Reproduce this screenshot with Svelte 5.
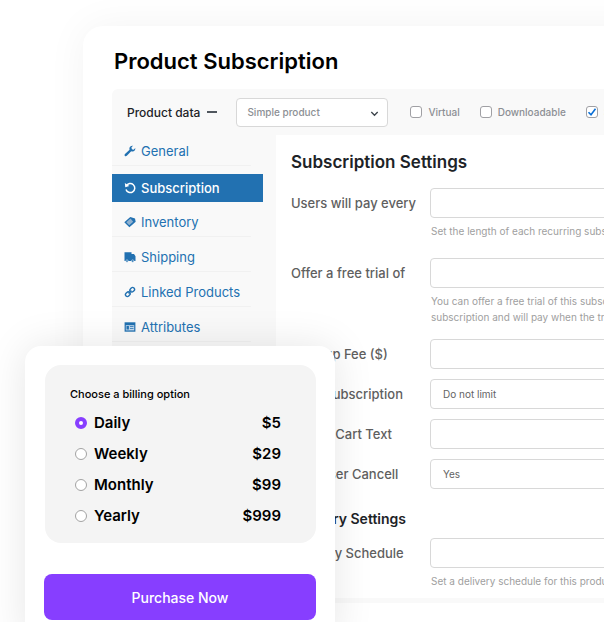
<script>
	const tabs = [
		{ id: 'general', label: 'General' },
		{ id: 'subscription', label: 'Subscription' },
		{ id: 'inventory', label: 'Inventory' },
		{ id: 'shipping', label: 'Shipping' },
		{ id: 'linked', label: 'Linked Products' },
		{ id: 'attributes', label: 'Attributes' }
	];

	const settings = [
		{ id: 'period', label: 'Users will pay every', hint: ['Set the length of each recurring subscription period.'] },
		{
			id: 'trial',
			label: 'Offer a free trial of',
			hint: [
				'You can offer a free trial of this subscription. The user gets the',
				'subscription and will pay when the trial period expires.'
			]
		},
		{ id: 'signup', label: 'Sign-up Fee ($)' },
		{ id: 'limit', label: 'Limit Subscription', options: ['Do not limit', 'Limit to one'] },
		{ id: 'cart', label: 'Add to Cart Text' },
		{ id: 'cancel', label: 'Can User Cancell', options: ['Yes', 'No'] }
	];

	const delivery = [
		{ id: 'schedule', label: 'Delivery Schedule', hint: ['Set a delivery schedule for this product.'] }
	];

	const plans = [
		{ id: 'daily', label: 'Daily', price: '$5' },
		{ id: 'weekly', label: 'Weekly', price: '$29' },
		{ id: 'monthly', label: 'Monthly', price: '$99' },
		{ id: 'yearly', label: 'Yearly', price: '$999' }
	];

	let activeTab = $state('subscription');
	let plan = $state('daily');
	let virtual = $state(false);
	let downloadable = $state(false);
	let subscription = $state(true);
</script>

{#snippet icon(id)}
	<svg class="icon" viewBox="0 0 12 12" aria-hidden="true">
		{#if id === 'general'}
			<path d="M11.3 3.1 9.6 4.7 7.9 4.2 7.4 2.5 9 .8C7.3.5 5.5 1.6 5.4 3.4c0 .5 0 .9.2 1.3L1 9.1c-.6.6-.6 1.3-.1 1.8s1.3.5 1.9-.1L7.2 6.3C9.500 7.3 11.700 5.4 11.3 3.1z" fill="currentColor" />
		{:else if id === 'subscription'}
			<path d="M2.3 3.9A4.5 4.5 0 1 1 2 7.4" fill="none" stroke="currentColor" stroke-width="1.5" />
			<path d="M.8.9 1.3 5.2 5.3 4z" fill="currentColor" />
		{:else if id === 'inventory'}
			<path d="M.3 6.3 6.3.9 11 2.4 11.7 5.8 5.4 11.3z" fill="currentColor" />
			<path d="M2.3 6.3 6.5 2.6 9.2 5.7 5.2 9.3z" fill="#8fb1d0" />
		{:else if id === 'shipping'}
			<path d="M.5 1.3h7v1.800h2.500l1.500 2.200v4.600H.5z" fill="currentColor" />
			<circle cx="3" cy="10" r="1.200" fill="currentColor" stroke="#fafafa" stroke-width=".5" />
			<circle cx="8.700" cy="10" r="1.200" fill="currentColor" stroke="#fafafa" stroke-width=".5" />
		{:else if id === 'linked'}
			<g fill="none" stroke="currentColor" stroke-width="1.4" transform="rotate(-45 6 6)">
				<rect x=".4" y="4.1" width="5" height="3.8" rx="1.9" />
				<rect x="6.6" y="4.1" width="5" height="3.8" rx="1.9" />
				<path d="M4 6h4" />
			</g>
		{:else}
			<path d="M.6 1.3h10.800v9.400H.6z" fill="currentColor" />
			<path d="M1.800 4.200h8.400v5.200H1.800z" fill="#c5dbee" />
			<path d="M2.500 5h2.400v3.600H2.500zM5.900 5.200h3.600v.8H5.900zM5.900 7.300h3.600v.8H5.900z" fill="currentColor" />
		{/if}
	</svg>
{/snippet}

{#snippet field(item)}
	<div class="field">
		<label for={item.id}>{item.label}</label>
		<div class="control">
			{#if item.options}
				<select id={item.id}>
					{#each item.options as option}
						<option>{option}</option>
					{/each}
				</select>
			{:else}
				<input id={item.id} type="text" />
			{/if}
			{#if item.hint}
				<p class="hint">
					{#each item.hint as line}
						<span>{line}</span>
					{/each}
				</p>
			{/if}
		</div>
	</div>
{/snippet}

<main class="page">
	<section class="panel">
		<h1>Product Subscription</h1>
		<div class="product">
			<header class="product-head">
				<label class="type" for="type">Product data <span class="dash"></span></label>
				<div class="type-select">
					<select id="type">
						<option>Simple product</option>
						<option>Variable product</option>
					</select>
					<svg class="chevron" viewBox="0 0 8 6" aria-hidden="true"><path d="M.8 1 4 4.3 7.2 1" fill="none" stroke="#3c434a" stroke-width="1.3" /></svg>
				</div>
				<label class="check"><input type="checkbox" bind:checked={virtual} />Virtual</label>
				<label class="check"><input type="checkbox" bind:checked={downloadable} />Downloadable</label>
				<label class="check"><input type="checkbox" bind:checked={subscription} />Subscription</label>
			</header>
			<div class="product-body">
				<nav>
					<ul>
						{#each tabs as tab}
							<li class:active={activeTab === tab.id}>
								<button onclick={() => (activeTab = tab.id)}>{@render icon(tab.id)}{tab.label}</button>
							</li>
						{/each}
					</ul>
				</nav>
				<div class="settings">
					<h2>Subscription Settings</h2>
					<div class="fields">
						{#each settings as item}
							{@render field(item)}
						{/each}
					</div>
					<h3>Delivery Settings</h3>
					<div class="fields">
						{#each delivery as item}
							{@render field(item)}
						{/each}
					</div>
				</div>
			</div>
		</div>
	</section>

	<form class="card" onsubmit={(e) => e.preventDefault()}>
		<fieldset>
			<legend>Choose a billing option</legend>
			{#each plans as option}
				<label class="plan">
					<input type="radio" name="plan" value={option.id} bind:group={plan} />
					<span>{option.label}</span>
					<span class="price">{option.price}</span>
				</label>
			{/each}
		</fieldset>
		<button class="buy">Purchase Now</button>
	</form>
</main>

<style>
	:global(body) { margin: 0; background: #fff; }
	.page { position: relative; box-sizing: border-box; height: 100vh; overflow: hidden; padding: 26px 0 0 83px; font-family: Inter, sans-serif; color: #000; }
	.page :global(*) { box-sizing: border-box; }
	input, select, button { font-family: inherit; margin: 0; }

	/* the panel runs off the right edge of the window */
	.panel { margin-right: -160px; padding: 20px 0 40px 29px; background: #fff; border-radius: 20px; box-shadow: 0 0 40px rgba(0, 0, 0, 0.05); }
	h1 { margin: 0 0 13px 2px; font-size: 22px; line-height: 30px; font-weight: 600; }
	.product { background: #f9f9f9; border-radius: 6px 0 0 0; padding-bottom: 5px; }
	.product-head { display: flex; align-items: center; height: 46px; padding-left: 15px; white-space: nowrap; }
	.type { display: flex; align-items: center; gap: 7px; margin-right: 19px; font-size: 12px; font-weight: 500; color: #1d2327; }
	.dash { width: 10px; height: 2px; background: #50575e; }
	.type-select { position: relative; width: 152px; margin-right: 22px; }
	.type-select select { width: 100%; height: 29px; padding: 0 10px; color: #8c8f94; font-weight: 500; }
	.chevron { position: absolute; right: 9px; top: 13px; width: 9px; height: 6px; pointer-events: none; }
	.check { display: flex; align-items: center; gap: 6px; margin-right: 20px; font-size: 10px; font-weight: 500; color: #8c8f94; }
	.check input { appearance: none; width: 12px; height: 12px; border: 1px solid #a0a0a4; border-radius: 3px; background: #fff; }
	.check input:checked { background: #fff url("data:image/svg+xml,%3Csvg xmlns='http://www.w3.org/2000/svg' viewBox='0 0 10 10'%3E%3Cpath d='M1.5 5.2 4 7.8 8.5 1.8' fill='none' stroke='%230a6fd6' stroke-width='1.6'/%3E%3C/svg%3E") center / 10px no-repeat; }

	.product-body { display: flex; }
	nav { width: 164px; flex: none; }
	ul { display: flex; flex-direction: column; gap: 6px; list-style: none; margin: 0; padding: 2px 13px 0 0; }
	li { padding-bottom: 1px; background: linear-gradient(#f1f1f1, #f1f1f1) left bottom / 92% 1px no-repeat; }
	li.active { margin-top: 2px; padding: 0; background: none; }
	li button { display: flex; align-items: center; gap: 5px; width: 100%; height: 28px; padding: 0 12px; border: none; background: none; color: #2271b1; font-size: 13px; text-align: left; cursor: pointer; }
	li.active button { background: #2271b1; color: #fff; font-weight: 500; }
	.icon { width: 12px; height: 12px; flex: none; }

	.settings { flex: 1; padding: 15px 0 0 15px; background: #fff; }
	h2 { margin: 0 0 14px; font-size: 17px; line-height: 24px; font-weight: 600; color: #1d2327; }
	h3 { margin: 20px 0 9px; font-size: 14px; line-height: 20px; font-weight: 600; color: #1d2327; }
	.fields { display: flex; flex-direction: column; gap: 10px; }
	.field { display: flex; }
	.field label { width: 139px; flex: none; font-size: 13px; line-height: 30px; font-weight: 500; color: #5f5f5f; white-space: nowrap; }
	.control { flex: 1; }
	.control input, .control select { display: block; width: 100%; height: 30px; padding: 0 12px; }
	.control input, select { appearance: none; border: 1px solid #d8d8d8; border-radius: 4px; background: #fff; font-size: 10px; color: #646464; }
	.hint { min-height: 25px; margin: 5px 0 0 1px; padding-bottom: 4px; font-size: 10px; line-height: 16px; color: #a0a0a0; white-space: nowrap; }
	.hint span { display: block; }

	/* storefront card laid over the admin panel */
	.card { position: absolute; left: 25px; top: 346px; width: 310px; padding: 19px 19px 24px; background: #fff; border-radius: 16px; box-shadow: 0 0 40px rgba(0, 0, 0, 0.1); }
	fieldset { margin: 0 0 31px 1px; padding: 19px 35px 12px 25px; border: none; border-radius: 16px; background: #f4f4f4; }
	legend { float: left; width: 100%; margin-bottom: 3px; padding: 0; font-size: 11px; line-height: 20px; font-weight: 500; }
	.plan { clear: both; display: flex; align-items: center; height: 31px; gap: 7px; padding-left: 5px; font-size: 15px; font-weight: 600; }
	.plan input { appearance: none; width: 12px; height: 12px; border: 1px solid #a3a3a3; border-radius: 50%; background: #fff; }
	.plan input:checked { border: 4px solid #873eff; }
	.price { margin-left: auto; }
	.buy { display: block; width: 100%; height: 46px; border: none; border-radius: 8px; background: #873eff; color: #fff; font-size: 14px; font-weight: 500; cursor: pointer; }
</style>
